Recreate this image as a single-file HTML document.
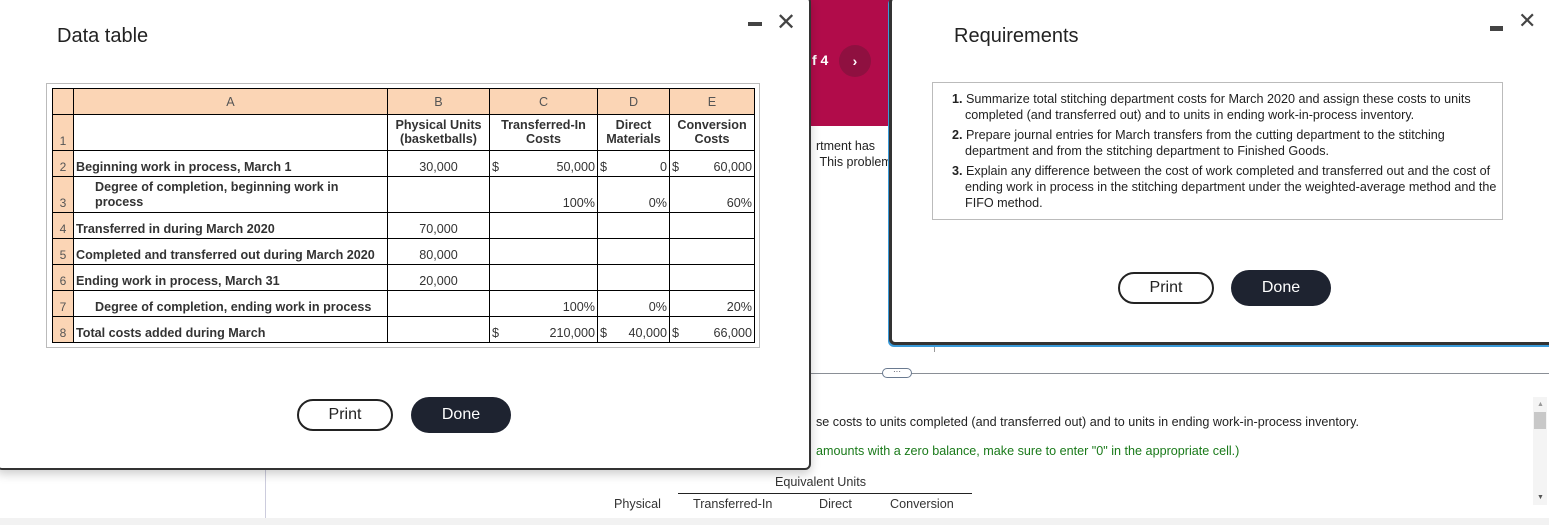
<!DOCTYPE html>
<html><head><style>
*{margin:0;padding:0;box-sizing:border-box}
body{width:1549px;height:525px;position:relative;overflow:hidden;background:#fff;font-family:"Liberation Sans",Arial,sans-serif;color:#222}
.abs{position:absolute}
.crim{left:800px;top:0;width:100px;height:126px;background:#b10c4a}
.dlg{background:#fff}
table{border-collapse:collapse;font-size:12.6px;color:#333;table-layout:fixed}
td{border:1px solid #000;padding:0 2px;height:26px;vertical-align:bottom;padding-bottom:2px;white-space:nowrap;overflow:hidden}
td.n{background:#fbd5b5;text-align:center;color:#555;font-size:12px}
tr.h td{background:#fbd5b5;text-align:center;color:#555;vertical-align:middle;padding-bottom:0}
.b{font-weight:bold;color:#333}
.r{text-align:right}
.c{text-align:center}
.btn{position:absolute;border-radius:18px;font-size:16px;display:flex;align-items:center;justify-content:center}
.pr{border:2px solid #222;background:#fff;color:#222}
.dn{background:#1e2330;color:#fff}
</style></head><body>
<div class="abs crim"></div>
<div class="abs" style="left:839px;top:45px;width:32px;height:32px;border-radius:50%;background:#8f1040;color:#fff;font-size:14px;text-align:center;line-height:32px;font-weight:bold">›</div>
<div class="abs" style="left:812px;top:52px;color:#fff;font-weight:bold;font-size:14px">f 4</div>
<div class="abs" style="left:816px;top:138px;font-size:12.5px;color:#222;line-height:16px">rtment has<br>&nbsp;This problem</div>
<div class="abs" style="left:811px;top:373px;width:738px;height:1px;background:#8a8f96"></div>
<div class="abs" style="left:882px;top:368px;width:30px;height:10px;border:1px solid #6a7a90;border-radius:5px;background:#fff;font-size:8px;line-height:6px;text-align:center;color:#334">···</div>
<div class="abs" style="left:934px;top:330px;width:1px;height:22px;background:#999"></div>
<div class="abs" style="left:816px;top:415px;font-size:12.6px;color:#222">se costs to units completed (and transferred out) and to units in ending work-in-process inventory.</div>
<div class="abs" style="left:816px;top:444px;font-size:12.6px;color:#1a7a1a">amounts with a zero balance, make sure to enter "0" in the appropriate cell.)</div>
<div class="abs" style="left:775px;top:475px;font-size:12.6px;color:#333">Equivalent Units</div>
<div class="abs" style="left:678px;top:493px;width:294px;height:1px;background:#222"></div>
<div class="abs" style="left:614px;top:497px;font-size:12.6px;color:#333">Physical</div>
<div class="abs" style="left:693px;top:497px;font-size:12.6px;color:#333">Transferred-In</div>
<div class="abs" style="left:819px;top:497px;font-size:12.6px;color:#333">Direct</div>
<div class="abs" style="left:890px;top:497px;font-size:12.6px;color:#333">Conversion</div>
<div class="abs" style="left:265px;top:470px;width:1px;height:48px;background:#ccd"></div>
<div class="abs" style="left:1533px;top:397px;width:14px;height:108px;background:#f4f4f4"></div>
<div class="abs" style="left:1534px;top:412px;width:12px;height:17px;background:#c8c8c8"></div>
<div class="abs" style="left:1537px;top:401px;font-size:7px;color:#999">▲</div>
<div class="abs" style="left:1537px;top:494px;font-size:7px;color:#555">▼</div>
<div class="abs" style="left:0;top:518px;width:1549px;height:7px;background:#f2f2f2"></div>

<!-- left dialog -->
<div class="abs dlg" style="left:-4px;top:-4px;width:815px;height:474px;border:2px solid #333;border-radius:6px;box-shadow:0 4px 10px rgba(0,0,0,.2)"></div>
<div class="abs" style="left:57px;top:25px;font-size:20px;color:#222">Data table</div>
<div class="abs" style="left:748px;top:22px;width:14px;height:4px;background:#444"></div>
<div class="abs" style="left:776px;top:8px;font-size:24px;color:#444">✕</div>
<div class="abs" style="left:46px;top:83px;width:714px;height:265px;border:1px solid #bbb"></div>
<table class="abs" style="left:52px;top:88px;width:702px">
<colgroup><col style="width:21px"><col style="width:314px"><col style="width:102px"><col style="width:108px"><col style="width:72px"><col style="width:85px"></colgroup>
<tr class="h"><td></td><td>A</td><td>B</td><td>C</td><td>D</td><td>E</td></tr>
<tr style="height:36px"><td class="n">1</td><td></td><td class="b c" style="vertical-align:middle">Physical Units<br>(basketballs)</td><td class="b c" style="vertical-align:middle">Transferred-In<br>Costs</td><td class="b c" style="vertical-align:middle">Direct<br>Materials</td><td class="b c" style="vertical-align:middle">Conversion<br>Costs</td></tr>
<tr><td class="n">2</td><td class="b">Beginning work in process, March 1</td><td class="c">30,000</td><td>$<span style="float:right">50,000</span></td><td>$<span style="float:right">0</span></td><td>$<span style="float:right">60,000</span></td></tr>
<tr style="height:36px"><td class="n">3</td><td class="b" style="padding-left:21px;line-height:15px;white-space:normal">Degree of completion, beginning work in process</td><td></td><td class="r">100%</td><td class="r">0%</td><td class="r">60%</td></tr>
<tr><td class="n">4</td><td class="b">Transferred in during March 2020</td><td class="c">70,000</td><td></td><td></td><td></td></tr>
<tr><td class="n">5</td><td class="b">Completed and transferred out during March 2020</td><td class="c">80,000</td><td></td><td></td><td></td></tr>
<tr><td class="n">6</td><td class="b">Ending work in process, March 31</td><td class="c">20,000</td><td></td><td></td><td></td></tr>
<tr><td class="n">7</td><td class="b" style="padding-left:21px">Degree of completion, ending work in process</td><td></td><td class="r">100%</td><td class="r">0%</td><td class="r">20%</td></tr>
<tr><td class="n">8</td><td class="b">Total costs added during March</td><td></td><td>$<span style="float:right">210,000</span></td><td>$<span style="float:right">40,000</span></td><td>$<span style="float:right">66,000</span></td></tr>
</table>
<div class="btn pr" style="left:297px;top:399px;width:96px;height:32px">Print</div>
<div class="btn dn" style="left:411px;top:397px;width:100px;height:36px">Done</div>

<!-- right dialog -->
<div class="abs dlg" style="left:889px;top:-4px;width:670px;height:349px;border:3px solid #333;border-radius:6px;box-shadow:-1px 2px 0 #3a9ad9"></div>
<div class="abs" style="left:954px;top:25px;font-size:20px;color:#222">Requirements</div>
<div class="abs" style="left:1490px;top:26px;width:13px;height:5px;background:#444"></div>
<div class="abs" style="left:1518px;top:8px;font-size:22px;color:#444">✕</div>
<div class="abs" style="left:932px;top:82px;width:571px;height:138px;border:1px solid #bbb"></div>
<ol class="abs" style="left:952px;top:91px;width:545px;font-size:12.6px;line-height:16px;color:#222;list-style:none">
<li style="padding-left:13px;text-indent:-13px;margin-bottom:4px"><b>1.</b> Summarize total stitching department costs for March 2020 and assign these costs to units completed (and transferred out) and to units in ending work-in-process inventory.</li>
<li style="padding-left:13px;text-indent:-13px;margin-bottom:4px"><b>2.</b> Prepare journal entries for March transfers from the cutting department to the stitching department and from the stitching department to Finished Goods.</li>
<li style="padding-left:13px;text-indent:-13px"><b>3.</b> Explain any difference between the cost of work completed and transferred out and the cost of ending work in process in the stitching department under the weighted-average method and the FIFO method.</li>
</ol>
<div class="btn pr" style="left:1118px;top:272px;width:96px;height:32px">Print</div>
<div class="btn dn" style="left:1231px;top:270px;width:100px;height:36px">Done</div>
</body></html>
